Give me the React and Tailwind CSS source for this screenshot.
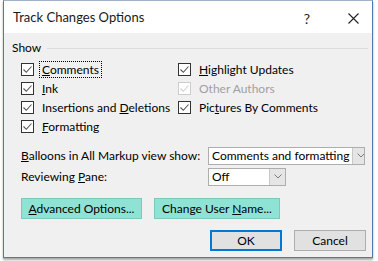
import React from 'react';

const font = { fontFamily: 'Lato, "Noto Sans", sans-serif' };

function Check({ disabled }) {
  return (
    <span
      className={`w-[13px] h-[13px] bg-white border flex items-center justify-center shrink-0 ${
        disabled ? 'border-[#cccccc]' : 'border-[#333333]'
      }`}
    >
      <svg width="11" height="11" viewBox="0 0 11 11">
        <path
          d="M1.5 5.5 L4.3 8.3 L9.5 2.5"
          fill="none"
          stroke={disabled ? '#cfcfcf' : '#555555'}
          strokeWidth="1.1"
        />
      </svg>
    </span>
  );
}

function Option({ children, disabled, focus }) {
  return (
    <div className="h-[19px] flex items-center whitespace-nowrap">
      <Check disabled={disabled} />
      <span
        className={`ml-[5px] px-[2px] leading-[15px] ${disabled ? 'text-[#a0a0a0]' : 'text-black'} ${
          focus ? 'border border-dotted border-black' : 'border border-transparent'
        }`}
      >
        {children}
      </span>
    </div>
  );
}

function Select({ value, width }) {
  return (
    <div className="flex h-[18px] border border-[#adadad] bg-white whitespace-nowrap overflow-hidden" style={{ width }}>
      <span className="flex-1 px-[3px] leading-[16px] text-black">{value}</span>
      <span className="w-[16px] bg-[#e5e5e5] border-l border-[#c8c8c8] flex items-center justify-center shrink-0">
        <svg width="8" height="5" viewBox="0 0 8 5">
          <path d="M0.5 0.5 L4 4 L7.5 0.5" fill="none" stroke="#7a7a7a" strokeWidth="1" />
        </svg>
      </span>
    </div>
  );
}

export default function App() {
  return (
    <div className="w-[378px] h-[261px] bg-white text-[12px]" style={font}>
      <div className="ml-[3px] w-[370px] h-[258px] border border-[#4e7cb0] border-t-[#9fb3c8] flex flex-col shadow-[0_2px_2px_rgba(0,0,0,0.35)]">
        {/* Title bar */}
        <div className="h-[32px] bg-white flex items-center shrink-0 pt-[2px]">
          <span className="ml-[9px] text-[13px] text-[#1a1a1a] whitespace-nowrap">Track Changes Options</span>
          <span className="ml-auto mr-[38px] text-[14px] text-[#222]">?</span>
          <svg className="mr-[13px]" width="11" height="11" viewBox="0 0 11 11">
            <path d="M0.5 0.5 L10.5 10.5 M10.5 0.5 L0.5 10.5" stroke="#222" strokeWidth="1.1" />
          </svg>
        </div>

        {/* Body */}
        <div className="flex-1 bg-[#f0f0f0] flex flex-col pl-[8px] pr-[4px]">
          <div className="mt-[8px] h-[14px] flex items-center">
            <span className="text-black leading-[14px]">Show</span>
            <span className="flex-1 ml-[6px] h-px bg-[#dcdcdc]" />
          </div>

          <div className="mt-[5px] flex pl-[9px]">
            <div className="w-[157px] flex flex-col">
              <Option focus>
                <u>C</u>omments
              </Option>
              <Option>
                <u>I</u>nk
              </Option>
              <Option>
                Insertions and <u>D</u>eletions
              </Option>
              <Option>
                <u>F</u>ormatting
              </Option>
            </div>
            <div className="flex flex-col">
              <Option>
                <u>H</u>ighlight Updates
              </Option>
              <Option disabled>Other Authors</Option>
              <Option>
                Pic<u>t</u>ures By Comments
              </Option>
            </div>
          </div>

          <div className="mt-[10px] h-[19px] flex items-center pl-[9px] whitespace-nowrap">
            <span className="w-[187px] text-black">
              <u>B</u>alloons in All Markup view show:
            </span>
            <Select value="Comments and formatting" width={157} />
          </div>
          <div className="mt-[2px] h-[19px] flex items-center pl-[9px] whitespace-nowrap">
            <span className="w-[187px] text-black">
              Reviewing <u>P</u>ane:
            </span>
            <Select value="Off" width={78} />
          </div>

          <div className="mt-[12px] flex pl-[9px] gap-[12px] whitespace-nowrap">
            <button className="w-[121px] h-[21px] bg-[#8fe3d5] border border-[#7fc7bb] text-black leading-[19px]">
              <u>A</u>dvanced Options...
            </button>
            <button className="w-[126px] h-[21px] bg-[#8fe3d5] border border-[#7fc7bb] text-black leading-[19px]">
              Change User <u>N</u>ame...
            </button>
          </div>

          <div className="mt-[11px] flex justify-end gap-[12px] pr-[2px]">
            <button className="w-[72px] h-[21px] bg-[#e1e1e1] border-2 border-[#0078d7] text-black leading-[17px]">
              OK
            </button>
            <button className="w-[72px] h-[21px] bg-[#e1e1e1] border border-[#adadad] text-black leading-[19px]">
              Cancel
            </button>
          </div>
        </div>
      </div>
    </div>
  );
}
